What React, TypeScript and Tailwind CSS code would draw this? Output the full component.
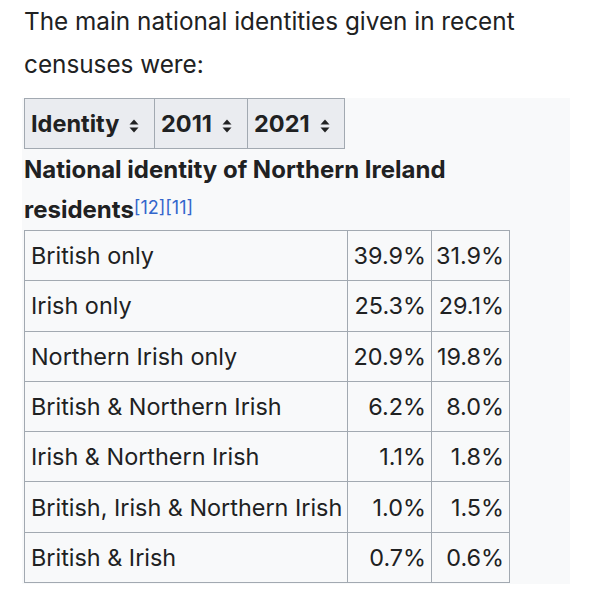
import React from 'react';

interface Row {
  identity: string;
  y2011: string;
  y2021: string;
}

const rows: Row[] = [
  { identity: 'British only', y2011: '39.9%', y2021: '31.9%' },
  { identity: 'Irish only', y2011: '25.3%', y2021: '29.1%' },
  { identity: 'Northern Irish only', y2011: '20.9%', y2021: '19.8%' },
  { identity: 'British & Northern Irish', y2011: '6.2%', y2021: '8.0%' },
  { identity: 'Irish & Northern Irish', y2011: '1.1%', y2021: '1.8%' },
  { identity: 'British, Irish & Northern Irish', y2011: '1.0%', y2021: '1.5%' },
  { identity: 'British & Irish', y2011: '0.7%', y2021: '0.6%' }
];

const SortIcon = () => (
  <svg width="10" height="14" viewBox="0 0 10 14" className="ml-[10px] inline-block align-[-1px]">
    <path d="M5 0.5 L9.5 5.5 L0.5 5.5 Z" fill="#202122" />
    <path d="M5 13.5 L9.5 8.5 L0.5 8.5 Z" fill="#202122" />
  </svg>
);

const headers = [
  { label: 'Identity', w: 'w-[130px]' },
  { label: '2011', w: 'w-[93px]' },
  { label: '2021', w: 'w-[97px]' }
];

const App = () => {
  return (
    <div
      className="w-[595px] h-[600px] bg-white text-[#202122] overflow-hidden"
      style={{ fontFamily: 'Inter, "Liberation Sans", sans-serif' }}
    >
      <p className="pl-6 pr-4 pt-0 text-[24.3px] leading-[43px]">
        The main national identities given in recent censuses were:
      </p>
      <div className="ml-[22px] mt-[12px] w-[548px] bg-[#f8f9fa] pb-[1px]">
        <table className="ml-[2px] border-collapse">
          <thead>
            <tr>
              {headers.map((h) => (
                <th
                  key={h.label}
                  className={`${h.w} h-[50px] border border-[#a2a9b1] bg-[#eaecf0] pl-[6px] text-left text-[23.5px] font-bold whitespace-nowrap`}
                >
                  {h.label}
                  <SortIcon />
                </th>
              ))}
            </tr>
          </thead>
        </table>
        <div className="ml-[2px] pt-[1px] text-[24px] font-bold leading-[40px]">
          National identity of Northern Ireland
          <br />
          residents
          <sup className="text-[18px] font-normal text-[#3366cc] relative -top-[4px]">[12][11]</sup>
        </div>
        <table className="ml-[2px] border-collapse">
          <tbody>
            {rows.map((r) => (
              <tr key={r.identity} className="h-[50.3px]">
                <td className="w-[323px] border border-[#a2a9b1] pl-[6px] text-[23.4px] whitespace-nowrap">
                  {r.identity}
                </td>
                <td className="w-[84px] border border-[#a2a9b1] pr-[5px] text-right text-[23.4px]">
                  {r.y2011}
                </td>
                <td className="w-[78px] border border-[#a2a9b1] pr-[5px] text-right text-[23.4px]">
                  {r.y2021}
                </td>
              </tr>
            ))}
          </tbody>
        </table>
      </div>
    </div>
  );
};

export default App;
